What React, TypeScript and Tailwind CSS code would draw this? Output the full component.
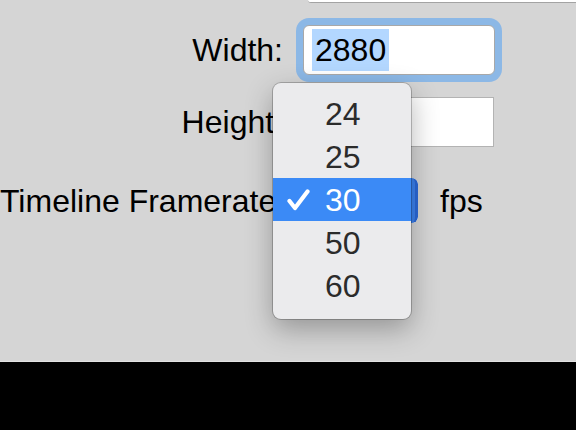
export default function App() {
  const items = ["24", "25", "30", "50", "60"];

  return (
    <div className="w-[576px] h-[430px] flex flex-col overflow-hidden font-['Liberation_Sans',Arial,sans-serif] text-[32px] leading-[32px]">
      {/* sheet area */}
      <div className="relative h-[361px] bg-[#d5d5d5]">
        {/* edge of field above */}
        <div className="ml-[308px] h-[3px] bg-white border-b border-[#a3a3a3] rounded-bl-[3px]" />

        {/* Width row */}
        <div className="mt-[22px] flex items-center">
          <div className="w-[283px] text-right text-black">Width:</div>
          <div className="ml-[20px] rounded-[6px] ring-[7px] ring-[#8cb8e6] w-[192px] h-[50px] bg-white border border-[#a8a8a8] flex items-center pl-[8px]">
            <span className="bg-[#b3d7ff] px-[3px] py-[5px] text-black">2880</span>
          </div>
        </div>

        {/* Height row */}
        <div className="mt-[22px] flex items-center">
          <div className="w-[283px] text-right text-black">Height:</div>
          <div className="ml-[20px] w-[191px] h-[50px] bg-white border border-[#b3b3b3]" />
        </div>

        {/* Framerate row */}
        <div className="mt-[31px] flex items-center">
          <div className="w-[283px] text-right text-black whitespace-nowrap">Timeline Framerate:</div>
          <div className="ml-[20px] w-[115px] h-[45px] flex rounded-[6px] bg-white overflow-hidden">
            <div className="flex-1" />
            <div className="w-[24px] bg-[#3b82f0] border-r-[3px] border-[#2a68d8] rounded-r-[6px]" />
          </div>
          <div className="ml-[22px] text-black">fps</div>
        </div>

        {/* popup menu */}
        <div className="absolute left-[273px] top-[83px] w-[138px] h-[236px] rounded-[8px] bg-[#ebebed] shadow-[0_10px_28px_rgba(0,0,0,0.3),0_0_0_1px_rgba(0,0,0,0.22)] pt-[9px] flex flex-col">
          {items.map((v) => {
            const active = v === "30";
            return (
              <div
                key={v}
                className={
                  active
                    ? "relative h-[43px] flex items-center pl-[52px] bg-[#3b8af6] text-white"
                    : "relative h-[43px] flex items-center pl-[52px] text-[#2b2b2b]"
                }
              >
                {active && (
                  <svg className="absolute left-[13px] top-[10px]" width="24" height="24" viewBox="0 0 24 24">
                    <path d="M3.5 13 L9 20 L21.5 3.5" fill="none" stroke="white" strokeWidth="4.2" strokeLinecap="round" strokeLinejoin="round" />
                  </svg>
                )}
                {v}
              </div>
            );
          })}
        </div>
      </div>
      <div className="h-[1px] bg-[#e2e2e2]" />
      <div className="flex-1 bg-black" />
    </div>
  );
}
